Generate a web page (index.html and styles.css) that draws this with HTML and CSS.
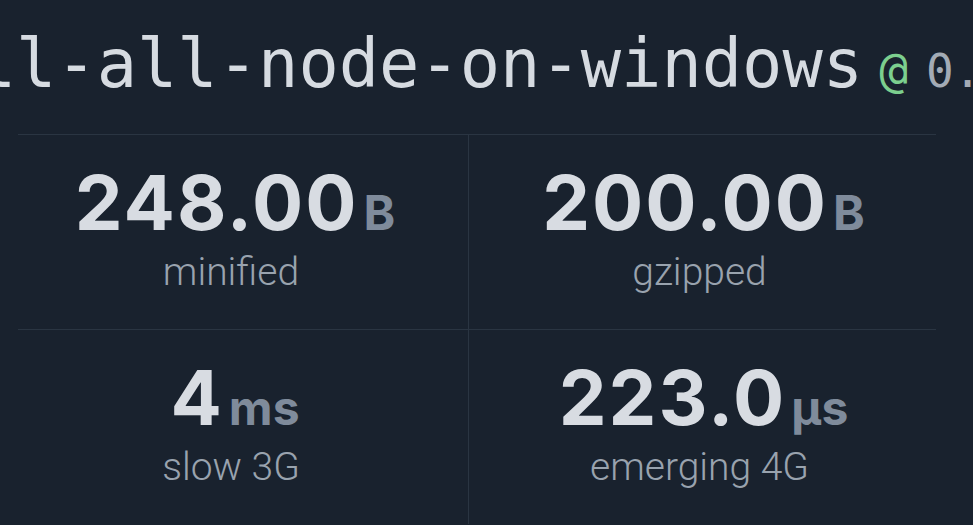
FILE: index.html
```html
<!DOCTYPE html>
<html lang="en">
<head>
    <meta charset="UTF-8">
    <meta name="viewport" content="width=device-width, initial-scale=1.0">
    <title>install-all-node-on-windows - bundle size</title>
    <link rel="stylesheet" href="styles.css">
</head>
<body>
    <div class="page">
        <h1 class="title">
            <span class="name">install-all-node-on-windows</span><span class="at">@</span><span class="version">0.1.0</span>
        </h1>

        <div class="stats">
            <div class="rule"></div>
            <div class="stat-row">
                <div class="stat">
                    <div class="value">248.00<span class="unit">B</span></div>
                    <div class="label">minified</div>
                </div>
                <div class="stat stat-right">
                    <div class="value">200.00<span class="unit">B</span></div>
                    <div class="label">gzipped</div>
                </div>
            </div>
            <div class="rule"></div>
            <div class="stat-row">
                <div class="stat">
                    <div class="value">4<span class="unit">ms</span></div>
                    <div class="label">slow 3G</div>
                </div>
                <div class="stat stat-right">
                    <div class="value">223.0<span class="unit">µs</span></div>
                    <div class="label">emerging 4G</div>
                </div>
            </div>
        </div>
    </div>
</body>
</html>
```

FILE: styles.css
```css
* {
    margin: 0;
    padding: 0;
    box-sizing: border-box;
}

body {
    background: #19222e;
    color: #d8dce2;
    font-family: Inter, "Noto Sans", sans-serif;
    overflow: hidden;
}

.page {
    width: 973px;
    height: 525px;
    overflow: hidden;
}

.title {
    display: flex;
    align-items: baseline;
    white-space: nowrap;
    padding-top: 31px;
    font-family: "DejaVu Sans Mono", monospace;
    font-weight: normal;
    font-size: 67px;
    line-height: 1;
    color: #d6dbe1;
}

.name {
    margin-left: -226px;
}

.at {
    margin: 0 18px 0 16px;
    font-size: 48px;
    color: #7ccf8e;
}

.version {
    font-size: 46px;
    color: #a3abb5;
}

.stats {
    width: 936px;
    margin-top: 36px;
}

.rule {
    height: 1px;
    margin-left: 18px;
    background: #2a3542;
}

.stat-row {
    display: grid;
    grid-template-columns: 468px 468px;
    height: 194px;
}

.stat {
    padding: 29px 6px 0 0;
    text-align: center;
}

.stat-right {
    border-left: 1px solid #2a3542;
}

.value {
    padding-left: 8px;
    font-size: 76px;
    font-weight: 700;
    line-height: 1;
    letter-spacing: 2px;
    color: #d8dce2;
}

.unit {
    margin-left: 5px;
    font-size: 48px;
    font-weight: 700;
    letter-spacing: 0;
    color: #7f8b9b;
}

.label {
    margin-top: 13px;
    font-family: Roboto, sans-serif;
    font-weight: 300;
    font-size: 39px;
    line-height: 1;
    color: #99a3ae;
}
```
